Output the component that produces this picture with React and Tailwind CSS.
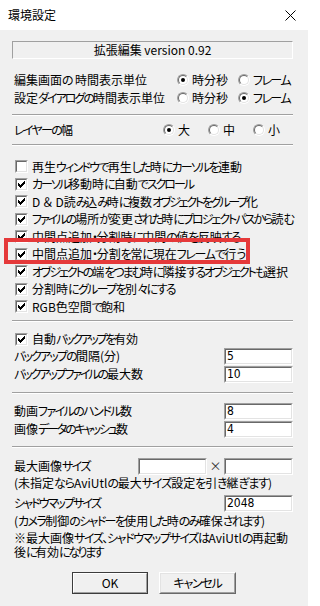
import React, { useLayoutEffect, useRef } from "react";

const CHECK_PATH =
  "M7 1h1v1h-1z M6 2h2v1h-2z M1 3h1v1h-1z M5 3h3v1h-3z M1 4h2v1h-2z M4 4h3v1h-3z M1 5h5v1h-5z M2 6h3v1h-3z M3 7h1v1h-1z";

function isKana(ch) {
  return /[\u3001-\u303F\u3040-\u309F\u30A0-\u30FF]/.test(ch);
}

// Text that takes the width the Windows UI font gives it: the kana carry the
// difference between this font's width and the reference width (measured at run time).
function JP({ t, w }) {
  const ref = useRef(null);
  const runs = [];
  let cur = "";
  let type = null;
  for (const ch of t) {
    const k = isKana(ch);
    if (k !== type && cur) {
      runs.push([type, cur]);
      cur = "";
    }
    type = k;
    cur += ch;
  }
  if (cur) runs.push([type, cur]);
  const n = [...t].filter(isKana).length;

  useLayoutEffect(() => {
    if (!w || !n || !ref.current) return;
    const fit = () => {
      const el = ref.current;
      if (!el) return;
      const spans = el.querySelectorAll("[data-k]");
      spans.forEach((s) => (s.style.letterSpacing = "0px"));
      const natural = el.getBoundingClientRect().width;
      const ls = (w - natural) / n;
      spans.forEach((s) => (s.style.letterSpacing = `${ls}px`));
    };
    fit();
    if (document.fonts && document.fonts.ready) document.fonts.ready.then(fit);
  }, [t, w, n]);

  return (
    <span ref={ref} className="inline-block whitespace-nowrap">
      {runs.map(([k, c], i) =>
        k ? (
          <span key={i} data-k="1">
            {c}
          </span>
        ) : (
          <span key={i}>{c}</span>
        )
      )}
    </span>
  );
}

function Check({ checked = true }) {
  return (
    <span className="block w-[13px] h-[13px] shrink-0 border border-t-[#a0a0a0] border-l-[#a0a0a0] border-r-white border-b-white">
      <span className="block w-full h-full border border-t-[#696969] border-l-[#696969] border-r-[#e3e3e3] border-b-[#e3e3e3] bg-white">
        {checked && (
          <svg width="9" height="9" viewBox="0 0 9 9" shapeRendering="crispEdges" className="block">
            <path d={CHECK_PATH} fill="#000" />
          </svg>
        )}
      </span>
    </span>
  );
}

function Radio({ on = false }) {
  return (
    <span className="block w-[12px] h-[12px] shrink-0 rounded-full border border-t-[#a0a0a0] border-l-[#a0a0a0] border-r-white border-b-white">
      <span className="flex items-center justify-center w-full h-full rounded-full border border-t-[#696969] border-l-[#696969] border-r-[#e3e3e3] border-b-[#e3e3e3] bg-white">
        {on && <span className="block w-[4px] h-[4px] rounded-full bg-black" />}
      </span>
    </span>
  );
}

function RadioOpt({ on, label, w, className }) {
  return (
    <div className={className}>
      <div className="flex items-center gap-[3px]">
        <Radio on={on} />
        <JP t={label} w={w} />
      </div>
    </div>
  );
}

function Field({ value = "" }) {
  return (
    <div className="w-[69px] h-[17px] shrink-0 border border-t-[#a0a0a0] border-l-[#a0a0a0] border-r-white border-b-white">
      <div className="w-full h-full border border-t-[#696969] border-l-[#696969] border-r-[#e3e3e3] border-b-[#e3e3e3] bg-white pl-[1px] flex items-center font-['Liberation_Sans_Narrow','DejaVu_Sans_Condensed',sans-serif] text-[12px] leading-[13px]">
        {value}
      </div>
    </div>
  );
}

function Sep() {
  return <div className="h-[2px] border-t border-t-[#a0a0a0] border-b border-b-white" />;
}

function CheckRow({ checked = true, label, w, className = "h-[17.5px]" }) {
  return (
    <div className={`flex items-center gap-[4px] pl-[3px] ${className}`}>
      <Check checked={checked} />
      <JP t={label} w={w} />
    </div>
  );
}

function FieldRow({ label, w, value }) {
  return (
    <div className="flex items-center h-[17px]">
      <div className="flex-1 pl-[2px]">
        <JP t={label} w={w} />
      </div>
      <Field value={value} />
    </div>
  );
}

export default function App() {
  const checks = [
    [false, "再生ウィンドウで再生した時にカーソルを連動", 210],
    [true, "カーソル移動時に自動でスクロール", 161],
    [true, "D ＆ D読み込み時に複数オブジェクトをグループ化", 226],
    [true, "ファイルの場所が変更された時にプロジェクトパスから読む", 261],
    [true, "中間点追加・分割時に中間の値を反映する", 208],
    [true, "中間点追加・分割を常に現在フレームで行う", 213],
    [true, "オブジェクトの端をつまむ時に隣接するオブジェクトも選択", 256],
    [true, "分割時にグループを別々にする", 143],
    [true, "RGB色空間で飽和", 93],
  ];

  return (
    <div className="relative w-[308px] h-[606px] overflow-hidden bg-[#f0f0f0] text-black text-[12px] leading-[14px] font-['Noto_Sans_CJK_JP',sans-serif] [font-feature-settings:'palt']">
      {/* title bar */}
      <div className="h-[30px] bg-white flex items-center justify-between pl-[8px] pr-[12px]">
        <span className="text-[12px]">環境設定</span>
        <svg width="11" height="11" viewBox="0 0 11 11" className="block">
          <path d="M0.5 0.5L10.5 10.5M10.5 0.5L0.5 10.5" stroke="#000" strokeWidth="1" />
        </svg>
      </div>

      {/* body */}
      <div className="pl-[12px] pr-[15px] pt-[11px]">
        <div className="h-[18px] flex items-center justify-center border border-t-[#a0a0a0] border-l-[#a0a0a0] border-r-white border-b-white">
          <span className="whitespace-nowrap">拡張編集 version 0.92</span>
        </div>

        <div className="mt-[12px] flex items-center h-[18px]">
          <div className="w-[165px] pl-[2px]">
            <JP t="編集画面の時間表示単位" w={133} />
          </div>
          <RadioOpt on label="時分秒" className="w-[61px]" />
          <RadioOpt label="フレーム" w={37} />
        </div>
        <div className="flex items-center h-[18px]">
          <div className="w-[165px] pl-[2px]">
            <JP t="設定ダイアログの時間表示単位" w={151} />
          </div>
          <RadioOpt label="時分秒" className="w-[61px]" />
          <RadioOpt on label="フレーム" w={37} />
        </div>

        <div className="mt-[7px]">
          <Sep />
        </div>

        <div className="mt-[5px] flex items-center h-[18px]">
          <div className="w-[151px] pl-[2px]">
            <JP t="レイヤーの幅" w={59} />
          </div>
          <RadioOpt on label="大" className="w-[45px]" />
          <RadioOpt label="中" className="w-[45px]" />
          <RadioOpt label="小" />
        </div>

        <div className="mt-[5px]">
          <Sep />
        </div>

        <div className="mt-[12px] flex flex-col">
          {checks.map(([c, l, w], i) => (
            <CheckRow key={i} checked={c} label={l} w={w} />
          ))}
        </div>

        <div className="mt-[4px]">
          <Sep />
        </div>

        <CheckRow label="自動バックアップを有効" w={106} className="h-[17px] mt-[9px]" />
        <div className="flex flex-col gap-[1px]">
          <FieldRow label="バックアップの間隔(分)" w={106} value="5" />
          <FieldRow label="バックアップファイルの最大数" w={129} value="10" />
        </div>

        <div className="mt-[9px]">
          <Sep />
        </div>

        <div className="mt-[9px] flex flex-col gap-[1px]">
          <FieldRow label="動画ファイルのハンドル数" w={118} value="8" />
          <FieldRow label="画像データのキャッシュ数" w={114} value="4" />
        </div>

        <div className="mt-[8px]">
          <Sep />
        </div>

        <div className="mt-[10px] flex items-center h-[17px]">
          <div className="w-[126px] pl-[2px]">
            <JP t="最大画像サイズ" w={76} />
          </div>
          <Field />
          <span className="w-[17px] text-center text-[#333]">×</span>
          <Field />
        </div>
        <div className="mt-[1px] h-[14px] pl-[2px] flex items-center">
          <JP t="(未指定ならAviUtlの最大サイズ設定を引き継ぎます)" w={258} />
        </div>

        <div className="mt-[5px]">
          <FieldRow label="シャドウマップサイズ" w={86} value="2048" />
        </div>
        <div className="mt-[2px] h-[14px] pl-[2px] flex items-center">
          <JP t="(カメラ制御のシャドーを使用した時のみ確保されます)" w={251} />
        </div>

        <div className="mt-[3px] pl-[2px] flex flex-col">
          <div className="h-[14px] flex items-center">
            <JP t="※最大画像サイズ、シャドウマップサイズはAviUtlの再起動" w={274} />
          </div>
          <div className="h-[14px] flex items-center">
            <JP t="後に有効になります" w={88} />
          </div>
        </div>

        <div className="mt-[13px] flex pl-[60px] gap-[11px]">
          <div className="w-[76px] h-[22px] border border-[#3c3c3c]">
            <div className="w-full h-full flex items-center justify-center bg-[#f0f0f0] border border-t-white border-l-white border-r-[#a0a0a0] border-b-[#a0a0a0]">
              OK
            </div>
          </div>
          <div className="w-[77px] h-[22px] border border-t-white border-l-white border-r-[#696969] border-b-[#696969]">
            <div className="w-full h-full flex items-center justify-center bg-[#f0f0f0] border border-t-[#e3e3e3] border-l-[#e3e3e3] border-r-[#a0a0a0] border-b-[#a0a0a0]">
              <JP t="キャンセル" w={48} />
            </div>
          </div>
        </div>
      </div>

      {/* annotation highlight */}
      <div className="absolute left-[4px] top-[238px] w-[246px] h-[26px] border-[4px] border-[#e5393a] pointer-events-none" />
    </div>
  );
}
